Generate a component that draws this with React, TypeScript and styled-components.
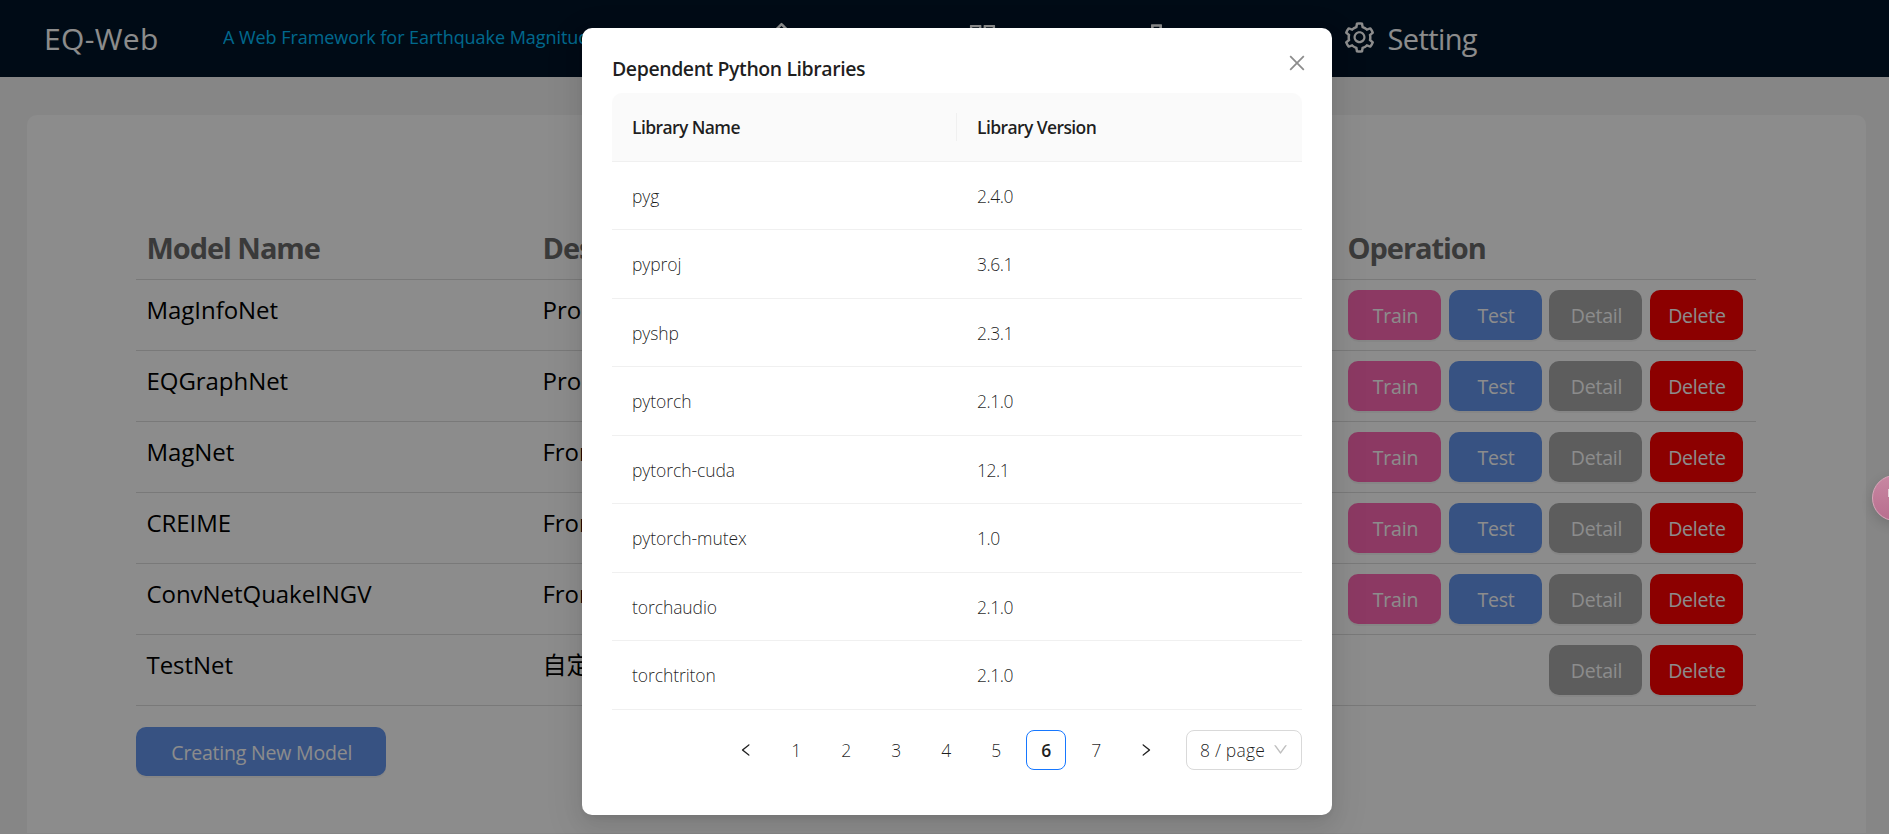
import React from "react";
import styled, { createGlobalStyle } from "styled-components";
import {
  AiOutlineHome,
  AiOutlineAppstore,
  AiOutlineApartment,
  AiOutlineSetting,
  AiOutlineClose,
  AiOutlineLeft,
  AiOutlineRight,
  AiOutlineDown,
} from "react-icons/ai";

const GlobalStyle = createGlobalStyle`
  * { box-sizing: border-box; }
  html, body { margin: 0; padding: 0; }
  body {
    background: #f5f5f5;
    font-family: "Open Sans", "Noto Sans", "Noto Sans CJK SC", sans-serif;
    overflow: hidden;
  }
`;

const Page = styled.div`
  position: relative;
  width: 1889px;
  height: 834px;
  overflow: hidden;
  background: #f5f5f5;
`;

const Header = styled.header`
  display: flex;
  align-items: center;
  height: 77px;
  padding-left: 44px;
  background: #001529;
  color: #fff;
`;

const Brand = styled.div`
  width: 179px;
  font-size: 30px;
  line-height: 77px;
  letter-spacing: 0.35px;
  white-space: nowrap;
`;

const Tagline = styled.div`
  width: 541px;
  padding-bottom: 4px;
  font-size: 18px;
  letter-spacing: -0.05px;
  color: #00bfff;
  white-space: nowrap;
  overflow: hidden;
`;

const Nav = styled.nav`
  display: flex;
  align-items: center;
`;

const NavItem = styled.a<{ $width: number; $drop?: number }>`
  display: flex;
  align-items: center;
  gap: 10.5px;
  width: ${(p) => p.$width}px;
  font-size: 29px;
  letter-spacing: -0.6px;
  white-space: nowrap;
  svg {
    flex: none;
    width: 35px;
    height: 35px;
    margin-top: ${(p) => p.$drop ?? 0}px;
    margin-bottom: 2px;
  }
`;

const Card = styled.main`
  margin: 38px 23px 0 27px;
  height: 718px;
  padding: 100px 110px 0 109px;
  border-radius: 10px 10px 0 0;
  background: #fff;
`;

const columns = "396px 805px 1fr";

const ModelHead = styled.div`
  display: grid;
  grid-template-columns: ${columns};
  align-items: center;
  height: 65px;
  padding: 1px 0 0 10.5px;
  border-bottom: 1px solid #dcdcdc;
  font-size: 29px;
  font-weight: 700;
  letter-spacing: -1.05px;
  line-height: 40px;
  color: #6b6b6b;
`;

const ModelRow = styled.div`
  display: grid;
  grid-template-columns: ${columns};
  height: 71px;
  padding: 10px 0 0 10.5px;
  border-bottom: 1px solid #dcdcdc;
  font-size: 24px;
  line-height: 40px;
  color: #000;
  white-space: nowrap;
`;

const Cell = styled.div`
  letter-spacing: -0.05px;
`;

const Actions = styled.div`
  display: flex;
  justify-content: flex-end;
  gap: 7.5px;
  width: 395px;
`;

const ActionButton = styled.button<{ $color: string; $width?: number }>`
  width: ${(p) => p.$width ?? 93}px;
  height: 49.5px;
  padding: 2px 0 0 2px;
  border: 1px solid transparent;
  border-radius: 10px;
  background: ${(p) => p.$color};
  background-clip: border-box;
  box-shadow: 0 2px 0 rgba(0, 0, 0, 0.04);
  color: #fff;
  font-family: inherit;
  font-size: 19.5px;
  letter-spacing: -0.2px;
`;

const Footer = styled.div`
  padding-top: 20.5px;
`;

const FloatingBall = styled.div`
  position: absolute;
  z-index: 3;
  left: 1872px;
  top: 475px;
  width: 46px;
  height: 46px;
  padding: 13px 0 0 15px;
  border: 1px solid #d8a5b9;
  border-radius: 50%;
  background: linear-gradient(180deg, #c887a2, #b86e8e);
  box-shadow: 0 4px 12px rgba(0, 0, 0, 0.15);
`;

const BallMark = styled.i`
  display: block;
  width: 14px;
  height: 8px;
  background: #e6d0d8;
`;

const Mask = styled.div`
  position: absolute;
  inset: 0;
  z-index: 1;
  display: flex;
  justify-content: center;
  align-items: flex-start;
  padding: 28px 0 0 25px;
  background: rgba(0, 0, 0, 0.45);
`;

const Modal = styled.section`
  position: relative;
  width: 750px;
  height: 787px;
  padding: 25px 30px;
  border-radius: 10px;
  background: #fff;
  box-shadow: 0 8px 20px rgba(0, 0, 0, 0.08), 0 4px 8px -5px rgba(0, 0, 0, 0.12),
    0 11px 35px 10px rgba(0, 0, 0, 0.05);
  color: rgba(0, 0, 0, 0.88);
`;

const Title = styled.h1`
  margin: 0;
  height: 40px;
  font-size: 19.5px;
  font-weight: 550;
  line-height: 32px;
  letter-spacing: -0.43px;
`;

const CloseButton = styled.span`
  position: absolute;
  top: 24px;
  right: 24px;
  display: flex;
  color: #8c8c8c;
  svg { width: 22px; height: 22px; }
`;

const LibraryHead = styled.div`
  display: flex;
  align-items: center;
  height: 68.5px;
  padding-top: 1px;
  border-bottom: 1px solid #f0f0f0;
  border-radius: 10px 10px 0 0;
  background: #fafafa;
  font-size: 17.5px;
  font-weight: 550;
  letter-spacing: -0.6px;
`;

const HeadCell = styled.div<{ $divided?: boolean }>`
  width: 345px;
  height: 28px;
  padding-left: 20px;
  line-height: 28px;
  border-right: ${(p) => (p.$divided ? "1px solid #f0f0f0" : "none")};
`;

const LibraryRow = styled.div`
  display: grid;
  grid-template-columns: 1fr 1fr;
  align-items: center;
  height: 68.5px;
  border-bottom: 1px solid #f0f0f0;
  font-size: 17.5px;
  font-weight: 350;
`;

const LibraryCell = styled.span<{ $numeric?: boolean }>`
  padding: 1px 0 0 20px;
  letter-spacing: ${(p) => (p.$numeric ? -0.45 : -0.08)}px;
`;

const Pagination = styled.div`
  display: flex;
  justify-content: flex-end;
  gap: 10px;
  margin-top: 20px;
`;

const PageItem = styled.span<{ $active?: boolean }>`
  display: flex;
  align-items: center;
  justify-content: center;
  width: 40px;
  height: 40px;
  border: 1px solid ${(p) => (p.$active ? "#1677ff" : "transparent")};
  border-radius: 8px;
  font-size: 17.5px;
  font-weight: ${(p) => (p.$active ? 600 : 350)};
  letter-spacing: -0.4px;
  svg { width: 16px; height: 16px; }
`;

const PageSize = styled.span`
  display: flex;
  align-items: center;
  justify-content: space-between;
  width: 116px;
  height: 40px;
  margin-left: 10px;
  padding: 1px 12px 0 13px;
  border: 1px solid #d9d9d9;
  border-radius: 8px;
  font-size: 17.5px;
  font-weight: 350;
  letter-spacing: 0.2px;
  white-space: nowrap;
  svg { width: 17px; height: 17px; margin-bottom: 2px; color: #bfbfbf; }
`;

const PINK = "#ff69b4";
const BLUE = "#6495ed";
const GRAY = "#a9a9a9";
const RED = "#ff0000";

const models = [
  { name: "MagInfoNet", description: "Proposed", builtin: true },
  { name: "EQGraphNet", description: "Proposed", builtin: true },
  { name: "MagNet", description: "From", builtin: true },
  { name: "CREIME", description: "From", builtin: true },
  { name: "ConvNetQuakeINGV", description: "From", builtin: true },
  { name: "TestNet", description: "自定义", builtin: false },
];

const libraries = [
  ["pyg", "2.4.0"],
  ["pyproj", "3.6.1"],
  ["pyshp", "2.3.1"],
  ["pytorch", "2.1.0"],
  ["pytorch-cuda", "12.1"],
  ["pytorch-mutex", "1.0"],
  ["torchaudio", "2.1.0"],
  ["torchtriton", "2.1.0"],
];

export default function App() {
  return (
    <Page>
      <GlobalStyle />
      <Header>
        <Brand>EQ-Web</Brand>
        <Tagline>A Web Framework for Earthquake Magnitude</Tagline>
        <Nav>
          <NavItem $width={201}><AiOutlineHome />Overview</NavItem>
          <NavItem $width={173.5}><AiOutlineAppstore />Model</NavItem>
          <NavItem $width={203.5} $drop={4}><AiOutlineApartment />Location</NavItem>
          <NavItem $width={150}><AiOutlineSetting />Setting</NavItem>
        </Nav>
      </Header>
      <Card>
        <ModelHead>
          <span>Model Name</span>
          <span>Description</span>
          <span>Operation</span>
        </ModelHead>
        {models.map((m) => (
          <ModelRow key={m.name}>
            <Cell>{m.name}</Cell>
            <Cell>{m.description}</Cell>
            <Actions>
              {m.builtin && <ActionButton $color={PINK}>Train</ActionButton>}
              {m.builtin && <ActionButton $color={BLUE}>Test</ActionButton>}
              <ActionButton $color={GRAY}>Detail</ActionButton>
              <ActionButton $color={RED}>Delete</ActionButton>
            </Actions>
          </ModelRow>
        ))}
        <Footer>
          <ActionButton $color={BLUE} $width={249.5}>Creating New Model</ActionButton>
        </Footer>
      </Card>
      <Mask>
        <Modal>
          <Title>Dependent Python Libraries</Title>
          <CloseButton><AiOutlineClose /></CloseButton>
          <LibraryHead>
            <HeadCell $divided>Library Name</HeadCell>
            <HeadCell>Library Version</HeadCell>
          </LibraryHead>
          {libraries.map(([name, version]) => (
            <LibraryRow key={name}>
              <LibraryCell>{name}</LibraryCell>
              <LibraryCell $numeric>{version}</LibraryCell>
            </LibraryRow>
          ))}
          <Pagination>
            <PageItem><AiOutlineLeft /></PageItem>
            {[1, 2, 3, 4, 5, 6, 7].map((n) => (
              <PageItem key={n} $active={n === 6}>{n}</PageItem>
            ))}
            <PageItem><AiOutlineRight /></PageItem>
            <PageSize>8 / page<AiOutlineDown /></PageSize>
          </Pagination>
        </Modal>
      </Mask>
      <FloatingBall><BallMark /></FloatingBall>
    </Page>
  );
}
